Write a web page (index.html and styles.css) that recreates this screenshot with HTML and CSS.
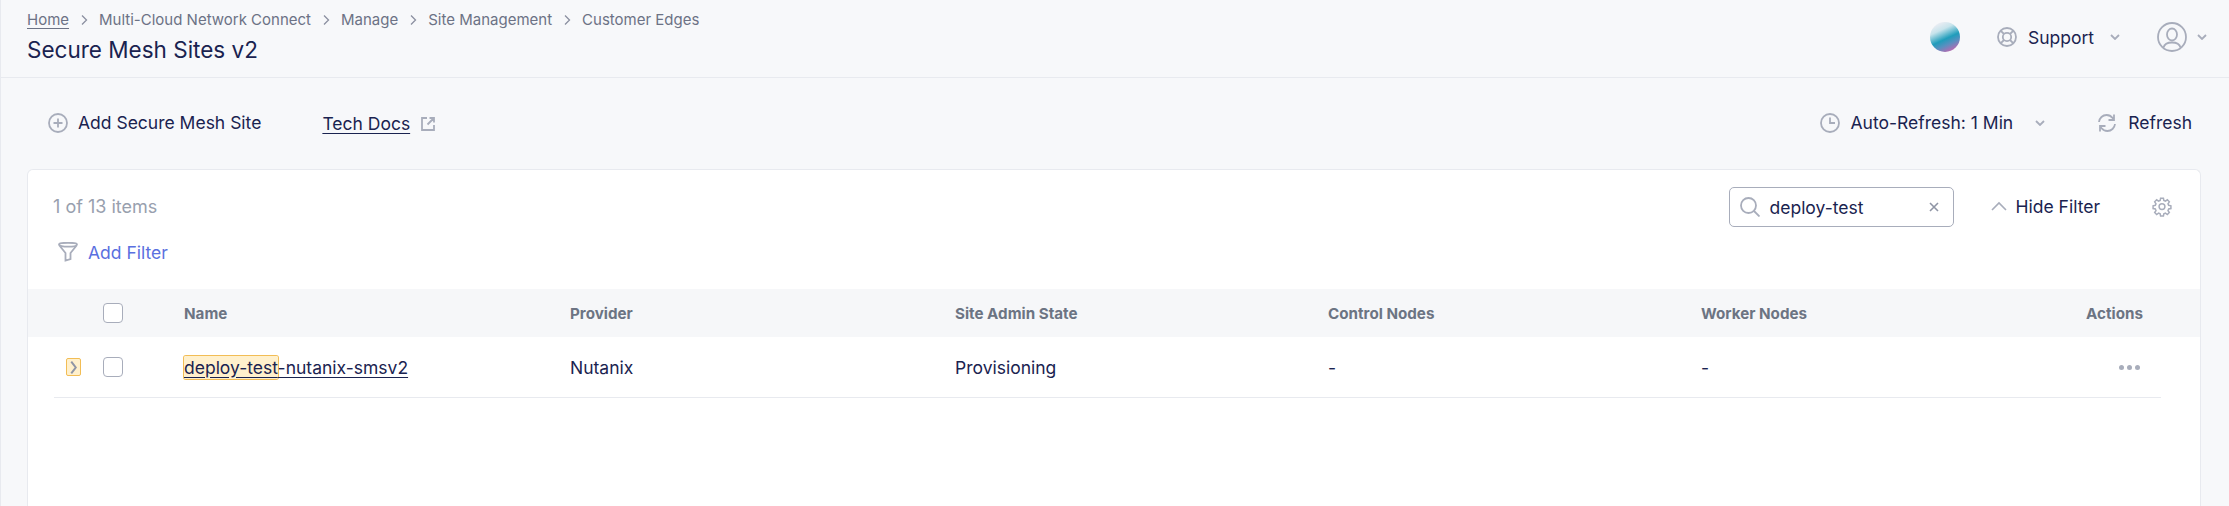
FILE: index.html
```html
<!DOCTYPE html>
<html lang="en">
<head>
  <meta charset="UTF-8" />
  <title>Secure Mesh Sites v2</title>
  <link rel="stylesheet" href="styles.css">
</head>
<body>
  <div class="page">
    <header class="topbar">
      <div class="heading">
        <nav class="crumbs">
          <a class="crumb-home">Home</a>
          <svg class="crumb-sep" viewBox="0 0 8 12"><path d="M2 1.500 6.500 6 2 10.500"/></svg>
          <span>Multi-Cloud Network Connect</span>
          <svg class="crumb-sep" viewBox="0 0 8 12"><path d="M2 1.500 6.500 6 2 10.500"/></svg>
          <span>Manage</span>
          <svg class="crumb-sep" viewBox="0 0 8 12"><path d="M2 1.500 6.500 6 2 10.500"/></svg>
          <span>Site Management</span>
          <svg class="crumb-sep" viewBox="0 0 8 12"><path d="M2 1.500 6.500 6 2 10.500"/></svg>
          <span>Customer Edges</span>
        </nav>
        <h1>Secure Mesh Sites v2</h1>
      </div>
      <div class="top-actions">
        <div class="orb"></div>
        <div class="support">
          <svg class="icon icon-20" viewBox="0 0 20 20"><circle cx="10" cy="10" r="9"/><circle cx="10" cy="10" r="4.200"/><path d="M3.600 3.600 7 7M16.400 3.600 13 7M3.600 16.400 7 13M16.400 16.400 13 13"/></svg>
          <span>Support</span>
          <svg class="chev" viewBox="0 0 10 6"><path d="M1 1 5 5 9 1"/></svg>
        </div>
        <div class="user">
          <svg class="icon icon-30" viewBox="0 0 30 30"><circle cx="15" cy="15" r="14"/><ellipse cx="15" cy="12.500" rx="5" ry="6"/><path d="M6.500 25.500c1-4 4-5 8.500-5s7.500 1 8.500 5"/></svg>
          <svg class="chev" viewBox="0 0 10 6"><path d="M1 1 5 5 9 1"/></svg>
        </div>
      </div>
    </header>

    <div class="toolbar">
      <div class="toolbar-left">
        <div class="add-site">
          <svg class="icon icon-20" viewBox="0 0 20 20"><circle cx="10" cy="10" r="9"/><path d="M10 5.500v9M5.500 10h9"/></svg>
          <span>Add Secure Mesh Site</span>
        </div>
        <div class="docs">
          <a>Tech Docs</a>
          <svg class="icon icon-14" viewBox="0 0 14 14"><path d="M6 1H1v12h12V8M8.500 1H13v4.500M13 1 6.500 7.500"/></svg>
        </div>
      </div>
      <div class="toolbar-right">
        <div class="auto-refresh">
          <svg class="icon icon-20" viewBox="0 0 20 20"><circle cx="10" cy="10" r="9"/><path d="M10 4.500V10h5"/></svg>
          <span>Auto-Refresh: 1 Min</span>
          <svg class="chev" viewBox="0 0 10 6"><path d="M1 1 5 5 9 1"/></svg>
        </div>
        <div class="refresh">
          <svg class="icon icon-20" viewBox="0 0 20 20"><path d="M2 9c.4-4 3.600-7 7.600-7 2.500 0 4.500 1 6 3l1.400 2M17 1.500V7h-5.500M18 11c-.4 4-3.600 7-7.600 7-2.500 0-4.500-1-6-3L3 13M3 18.500V13h5.500"/></svg>
          <span>Refresh</span>
        </div>
      </div>
    </div>

    <section class="card">
      <div class="card-top">
        <div class="count">1 of 13 items</div>
        <div class="search-tools">
          <div class="search">
            <svg class="icon icon-20 search-icon" viewBox="0 0 20 20"><circle cx="8.500" cy="8.500" r="7.500"/><path d="m14 14 5.500 5.500"/></svg>
            <span class="search-text">deploy-test</span>
            <svg class="clear" viewBox="0 0 10 10"><path d="M1 1l8 8M9 1 1 9"/></svg>
          </div>
          <div class="hide-filter">
            <svg class="chev-up" viewBox="0 0 16 10"><path d="M1 9 8 2l7 7"/></svg>
            <span>Hide Filter</span>
          </div>
          <svg class="icon icon-20 gear" viewBox="0 0 24 24"><path d="M10.300 1.500h3.400l.5 2.700 1.900.8 2.300-1.600 2.400 2.400-1.600 2.300.8 1.900 2.700.5v3.400l-2.700.5-.8 1.900 1.600 2.300-2.400 2.400-2.300-1.600-1.900.8-.5 2.700h-3.400l-.5-2.700-1.900-.8-2.300 1.600-2.400-2.400 1.600-2.300-.8-1.900-2.700-.5v-3.400l2.700-.5.800-1.900-1.600-2.300 2.400-2.400 2.300 1.600 1.900-.8z"/><circle cx="12" cy="11.500" r="3.500"/></svg>
        </div>
      </div>
      <div class="filter-row">
        <svg class="icon icon-20 funnel" viewBox="0 0 20 20"><path d="M1 2.500C1 1 5 .8 10 .8s9 .2 9 1.700c0 1.500-4 2.200-9 2.200s-9-.7-9-2.200zM1.200 3.200 7.500 11v7.500l5-1.500v-6l6.300-7.800"/></svg>
        <span>Add Filter</span>
      </div>

      <div class="cols table-head">
        <div></div>
        <div><span class="checkbox"></span></div>
        <div>Name</div>
        <div>Provider</div>
        <div>Site Admin State</div>
        <div>Control Nodes</div>
        <div>Worker Nodes</div>
        <div class="col-actions">Actions</div>
      </div>
      <div class="cols table-row">
        <div><span class="expand"><svg viewBox="0 0 10 16"><path d="M2.500 1.500 7.500 8l-5 6.500"/></svg></span></div>
        <div><span class="checkbox"></span></div>
        <div><a class="site-link"><mark>deploy-test</mark>-nutanix-smsv2</a></div>
        <div>Nutanix</div>
        <div>Provisioning</div>
        <div>-</div>
        <div>-</div>
        <div class="col-actions"><span class="dots"><i></i><i></i><i></i></span></div>
      </div>
    </section>
  </div>
</body>
</html>
```

FILE: styles.css
```css
html, body {
  margin: 0;
  height: 100%;
  overflow: hidden;
}
body {
  font-family: Inter, 'Noto Sans', sans-serif;
  font-size: 17.5px;
  color: #1a2350;
  background: #f7f8fa;
}
.page {
  height: 506px;
  border-left: 1px solid #e8eaef;
  display: flex;
  flex-direction: column;
}
.icon {
  fill: none;
  stroke: #a8adbb;
  stroke-width: 1.8;
  flex: none;
}
.icon-14 { width: 14px; height: 14px; }
.icon-20 { width: 20px; height: 20px; }
.icon-30 { width: 30px; height: 30px; }
.chev {
  width: 10px;
  height: 6px;
  fill: none;
  stroke: #a8adbb;
  stroke-width: 1.8;
  flex: none;
}

/* top bar */
.topbar {
  height: 77px;
  border-bottom: 1px solid #e8eaef;
  display: flex;
  justify-content: space-between;
  padding: 0 22px 0 26px;
}
.crumbs {
  display: flex;
  align-items: center;
  gap: 11px;
  margin-top: 10px;
  font-size: 15px;
  line-height: 20px;
  color: #6c7285;
}
.crumb-home {
  text-decoration: underline;
  text-underline-offset: 3px;
}
.crumb-sep {
  width: 8px;
  height: 12px;
  fill: none;
  stroke: #8b90a0;
  stroke-width: 1.300;
}
h1 {
  margin: 4px 0 0;
  font-size: 22.500px;
  line-height: 32px;
  font-weight: 400;
}
.top-actions {
  display: flex;
  align-items: center;
  margin-top: -3px;
}
.orb {
  width: 30px;
  height: 30px;
  border-radius: 50%;
  background: linear-gradient(155deg, #eeeef4 10%, #c8e4ec 30%, #1f9dbb 55%, #5a8fc0 70%, #a870b4 85%, #e890b0 100%);
}
.support {
  display: flex;
  align-items: center;
  margin-left: 37px;
  gap: 11px;
}
.support .chev { margin-left: 5px; }
.user {
  display: flex;
  align-items: center;
  margin-left: 37px;
  gap: 10px;
}

/* toolbar */
.toolbar {
  height: 91px;
  display: flex;
  justify-content: space-between;
  align-items: center;
  padding: 0 37px 2px 47px;
  box-sizing: border-box;
}
.toolbar-left, .toolbar-right, .add-site, .docs, .auto-refresh, .refresh {
  display: flex;
  align-items: center;
}
.add-site { gap: 10px; }
.docs { gap: 11px; margin-left: 61px; padding-top: 2px; }
.docs a { text-decoration: underline; text-underline-offset: 3px; }
.auto-refresh { gap: 11px; }
.auto-refresh .chev { margin-left: 11px; }
.refresh { gap: 11px; margin-left: 52px; }

/* card */
.card {
  flex: 1;
  margin: 0 28px 0 26px;
  background: #fff;
  border: 1px solid #e8eaef;
  border-bottom: none;
  border-radius: 6px 6px 0 0;
}
.card-top {
  display: flex;
  justify-content: space-between;
  align-items: center;
  padding: 17px 28px 0 25px;
}
.count {
  color: #98a0ae;
  font-size: 18px;
  margin-top: -2px;
}
.search-tools {
  display: flex;
  align-items: center;
}
.search {
  width: 225px;
  height: 40px;
  box-sizing: border-box;
  border: 1px solid #a8adbb;
  border-radius: 5px;
  display: flex;
  align-items: center;
  padding: 0 14px 0 10px;
}
.search-text {
  flex: 1;
  margin-left: 10px;
}
.clear {
  width: 10px;
  height: 10px;
  fill: none;
  stroke: #8f95a5;
  stroke-width: 1.6;
}
.hide-filter {
  display: flex;
  align-items: center;
  gap: 9px;
  margin-left: 37px;
  margin-top: -2px;
}
.chev-up {
  width: 16px;
  height: 10px;
  fill: none;
  stroke: #a8adbb;
  stroke-width: 1.6;
}
.gear { margin-left: 52px; }
.filter-row {
  display: flex;
  align-items: center;
  gap: 10px;
  height: 24px;
  margin-top: 13px;
  padding-left: 30px;
  color: #5a70e0;
}

/* table */
.cols {
  display: grid;
  align-items: center;
}
.table-head {
  grid-template-columns: 75px 81px 386px 385px 373px 373px 373px 1fr;
  height: 48px;
  margin-top: 25px;
  padding-right: 57px;
  background: #f6f7f9;
  font-size: 15.200px;
  font-weight: 700;
  color: #6c7483;
}
.table-row {
  height: 60px;
  margin: 0 39px 0 26px;
  padding-right: 21px;
  grid-template-columns: 49px 81px 386px 385px 373px 373px 373px 1fr;
  border-bottom: 1px solid #e8eaef;
}
.col-actions { text-align: right; }
.checkbox {
  display: block;
  width: 20px;
  height: 20px;
  box-sizing: border-box;
  border: 1px solid #a8adbb;
  border-radius: 4px;
  background: #fff;
}
.expand {
  display: flex;
  align-items: center;
  justify-content: center;
  width: 15px;
  height: 18px;
  box-sizing: border-box;
  margin-left: 12px;
  background: #fff0cc;
  border: 1px solid #f2bd55;
  border-radius: 2px;
}
.expand svg {
  width: 9px;
  height: 15px;
  fill: none;
  stroke: #8f95a5;
  stroke-width: 2.2;
}
.site-link {
  text-decoration: underline;
  text-underline-offset: 3px;
}
mark {
  color: inherit;
  background: #fff0cc;
  box-shadow: 0 0 0 1px #f2bd55;
  border-radius: 2px;
  padding: 1px 0;
}
.dots {
  display: flex;
  justify-content: flex-end;
  gap: 3px;
}
.dots i {
  width: 5px;
  height: 5px;
  border-radius: 50%;
  background: #a8adbb;
}
```
